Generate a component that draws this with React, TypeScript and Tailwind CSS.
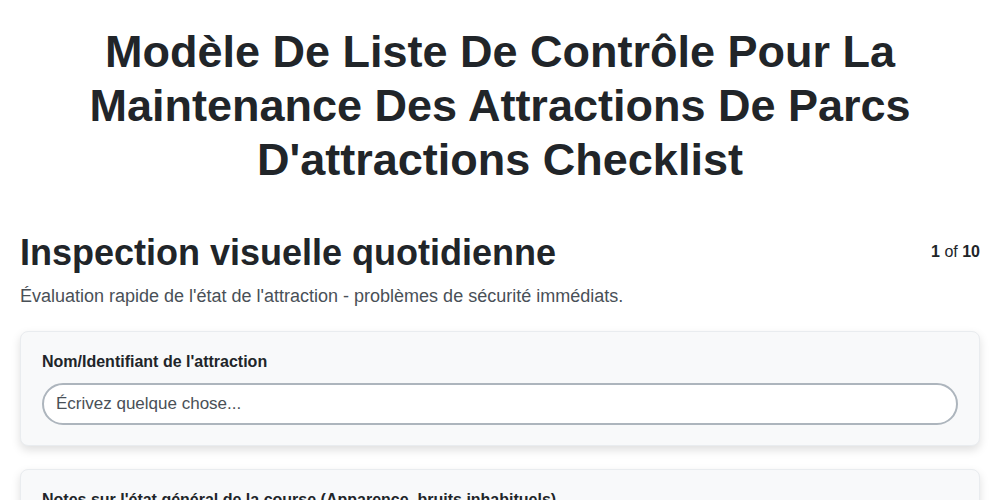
export default function App() {
  return (
    <div className="min-h-screen bg-white px-5 font-['Liberation_Sans',Arial,sans-serif] text-[#212529]">
      <h1 className="mx-auto mt-[25px] max-w-[860px] text-center text-[45px] font-bold leading-[54px]">
        Modèle De Liste De Contrôle Pour La Maintenance Des Attractions De Parcs D'attractions Checklist
      </h1>

      <div className="mt-[44px] flex items-start justify-between">
        <h2 className="text-[36px] font-bold leading-[43px]">Inspection visuelle quotidienne</h2>
        <div className="mt-[9px] text-base leading-6">
          <span className="font-bold">1</span> of <span className="font-bold">10</span>
        </div>
      </div>
      <p className="mt-[9px] text-[18px] leading-[27px] text-[#495057]">
        Évaluation rapide de l'état de l'attraction - problèmes de sécurité immédiats.
      </p>

      <div className="mt-[21px] flex flex-col gap-[23px]">
        <div className="rounded-lg border border-[#e9ecef] bg-[#f8f9fa] px-[21px] pt-[18px] pb-5 shadow-[0_4px_10px_rgba(0,0,0,0.13)]">
          <label className="block text-base font-bold leading-6">Nom/Identifiant de l'attraction</label>
          <input
            type="text"
            placeholder="Écrivez quelque chose..."
            className="mt-[9px] h-[42px] w-full rounded-full border-2 border-[#adb5bd] bg-white px-3 text-[17px] text-[#212529] placeholder:text-[#495057] focus:outline-none"
          />
        </div>
        <div className="rounded-lg border border-[#e9ecef] bg-[#f8f9fa] px-[21px] pt-[18px] pb-5 shadow-[0_4px_10px_rgba(0,0,0,0.13)]">
          <label className="block text-base font-bold leading-6">
            Notes sur l'état général de la course (Apparence, bruits inhabituels)
          </label>
          <textarea
            placeholder="Écrivez quelque chose..."
            className="mt-[9px] h-[90px] w-full rounded-2xl border-2 border-[#adb5bd] bg-white px-3 py-2 text-[17px] placeholder:text-[#495057] focus:outline-none"
          />
        </div>
      </div>
    </div>
  );
}
